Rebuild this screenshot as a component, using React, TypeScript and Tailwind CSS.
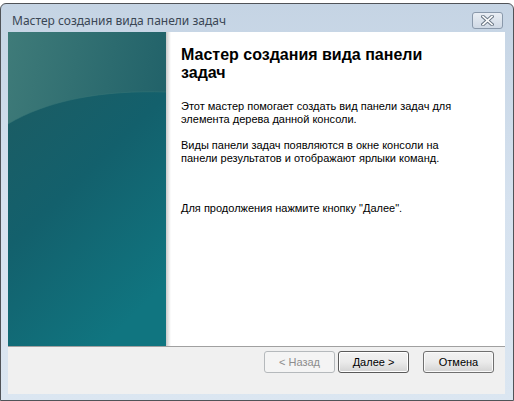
import React from 'react';

const uiFont = { fontFamily: '"Liberation Sans", Arial, sans-serif' };

function SidePicture() {
  return (
    <svg width="158" height="314" viewBox="0 0 158 314" className="block">
      <defs>
        <linearGradient id="dark" x1="0" y1="0" x2="0.6" y2="1">
          <stop offset="0" stopColor="#1c5c63" />
          <stop offset="0.45" stopColor="#13606c" />
          <stop offset="1" stopColor="#107580" />
        </linearGradient>
        <linearGradient id="top" x1="0" y1="0" x2="1" y2="0.4">
          <stop offset="0" stopColor="#3f7b79" />
          <stop offset="1" stopColor="#1f6068" />
        </linearGradient>
      </defs>
      <rect width="158" height="314" fill="url(#top)" />
      <path d="M0 92 C 40 68, 95 58, 158 60 L158 314 L0 314 Z" fill="url(#dark)" />
      <path d="M0 92 C 40 68, 95 58, 158 60" fill="none" stroke="#3a7877" strokeWidth="1" opacity="0.5" />
    </svg>
  );
}

function CloseButton() {
  return (
    <div className="w-[31px] h-[17px] rounded-[3px] border border-[#8a99ab] bg-gradient-to-b from-[#e9eef4] to-[#cfd9e5] flex items-center justify-center">
      <svg width="13" height="11" viewBox="0 0 13 11">
        <path d="M2 1.5 L11 9.5 M11 1.5 L2 9.5" stroke="#6d7a88" strokeWidth="3.6" strokeLinecap="square" />
        <path d="M2 1.5 L11 9.5 M11 1.5 L2 9.5" stroke="#ffffff" strokeWidth="1.6" strokeLinecap="square" />
      </svg>
    </div>
  );
}

function WizardButton({ label, disabled, isDefault }: { label: string; disabled?: boolean; isDefault?: boolean }) {
  return (
    <button
      className={`w-[71px] h-[22px] rounded-[3px] text-[11px] flex items-center justify-center ${
        disabled
          ? 'border border-[#b5b9bc] bg-[#f4f4f4] text-[#8d8d8d]'
          : isDefault
          ? 'border border-[#5a5a5a] shadow-[inset_0_0_0_1px_#ffffff] bg-gradient-to-b from-[#f2f2f2] via-[#ebebeb] to-[#d3d3d3] text-black'
          : 'border border-[#707070] shadow-[inset_0_0_0_1px_#fafafa] bg-gradient-to-b from-[#f2f2f2] via-[#ebebeb] to-[#d3d3d3] text-black'
      }`}
      style={uiFont}
    >
      {label}
    </button>
  );
}

export default function App() {
  return (
    <div className="w-[514px] h-[401px] bg-white overflow-hidden">
      <div className="mt-[3px] h-[398px] border border-[#505358] rounded-t-[6px] bg-gradient-to-b from-[#c5d4e4] via-[#d6e2ef] to-[#dbe6f1] flex flex-col pl-[7px] pr-[8px] pb-[6px]">
        {/* title bar */}
        <div className="h-[28px] flex items-start justify-between">
          <span
            className="mt-[10px] ml-[4px] text-[12px] leading-[14px] text-[#3a4654]"
            style={{ fontFamily: '"Noto Sans", "Open Sans", sans-serif' }}
          >
            Мастер создания вида панели задач
          </span>
          <div className="mt-[8px] mr-[2px]">
            <CloseButton />
          </div>
        </div>

        {/* client area */}
        <div className="flex-1 flex flex-col bg-white">
          <div className="flex h-[314px]">
            <SidePicture />
            <div className="w-[5px] bg-gradient-to-r from-[#c9c9c9] via-[#e6e6e6] to-white" />
            <div className="flex-1 pl-[10px] pr-[10px] pt-[14px] text-black" style={uiFont}>
              <h1 className="text-[16px] leading-[18px] font-bold">
                Мастер создания вида панели
                <br />
                задач
              </h1>
              <p className="mt-[18px] text-[11px] leading-[13px]">
                Этот мастер помогает создать вид панели задач для
                <br />
                элемента дерева данной консоли.
              </p>
              <p className="mt-[13px] text-[11px] leading-[13px]">
                Виды панели задач появляются в окне консоли на
                <br />
                панели результатов и отображают ярлыки команд.
              </p>
              <p className="mt-[37px] text-[11px] leading-[13px]">
                Для продолжения нажмите кнопку "Далее".
              </p>
            </div>
          </div>
          <div className="flex-1 border-t border-[#a0a0a0] bg-[#f0f0f0] flex items-start justify-end pt-[4px] pr-[11px]">
            <WizardButton label="< Назад" disabled />
            <div className="ml-[3px]">
              <WizardButton label="Далее >" isDefault />
            </div>
            <div className="ml-[14px]">
              <WizardButton label="Отмена" />
            </div>
          </div>
        </div>
      </div>
    </div>
  );
}
